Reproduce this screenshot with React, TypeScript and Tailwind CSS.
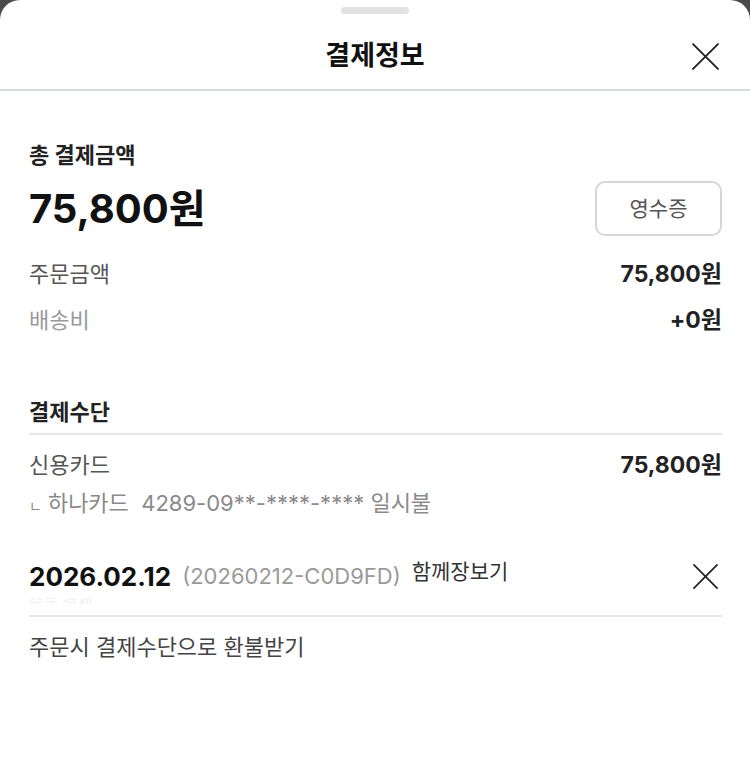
const font = { fontFamily: 'Inter, "Noto Sans CJK KR", "Noto Sans", sans-serif' };

function CloseIcon({ size }: { size: number }) {
  return (
    <svg width={size} height={size} viewBox="0 0 26 26" fill="none" stroke="#222" strokeWidth={1.8} strokeLinecap="round">
      <line x1="1" y1="1" x2="25" y2="25" />
      <line x1="25" y1="1" x2="1" y2="25" />
    </svg>
  );
}

function Row({ label, value, muted }: { label: string; value: string; muted?: boolean }) {
  return (
    <div className="flex items-center justify-between h-[46px]">
      <span className={muted ? 'text-[22px] text-[#9a9a9a]' : 'text-[22px] text-[#555]'}>{label}</span>
      <span className="text-[23px] font-bold text-[#222]">{value}</span>
    </div>
  );
}

export default function App() {
  return (
    <div className="w-[750px] h-[769px] bg-[#4a4a4a] overflow-hidden" style={font}>
      <div className="h-full bg-white rounded-t-[20px] flex flex-col">
        <div className="flex justify-center pt-[7px]">
          <div className="w-[68px] h-[7px] rounded-full bg-[#e2e2e2]" />
        </div>
        <div className="relative flex items-center justify-center h-[77px] pt-[8px] border-b-2 border-[#dadde0]">
          <h1 className="text-[27px] font-bold text-[#111] leading-[34px]">결제정보</h1>
          <div className="absolute right-[31px] top-[29px]">
            <CloseIcon size={27} />
          </div>
        </div>

        <div className="pl-[29px] pr-[28px] pt-[50px]">
          <div className="text-[22px] font-bold text-[#222] leading-[28px]">총 결제금액</div>
          <div className="flex items-center justify-between mt-[12px]">
            <span className="text-[40px] font-bold text-[#111] leading-none">75,800원</span>
            <button className="w-[127px] h-[55px] rounded-[10px] border-2 border-[#d6d6d6] text-[21px] text-[#555]">
              영수증
            </button>
          </div>
          <div className="mt-[15px]">
            <Row label="주문금액" value="75,800원" />
            <Row label="배송비" value="+0원" muted />
          </div>

          <div className="mt-[55px] pb-[5px] border-b-2 border-[#e6e6e6] leading-[28px]">
            <span className="text-[22px] font-bold text-[#222]">결제수단</span>
          </div>
          <div className="flex items-center justify-between mt-[16px] leading-[28px]">
            <span className="text-[22px] text-[#555]">신용카드</span>
            <span className="text-[23px] font-bold text-[#222]">75,800원</span>
          </div>
          <div className="mt-[10px] text-[22px] text-[#8a8a8a] leading-[28px]">
            <span className="text-[14px] mr-[6px]">ㄴ</span>하나카드&nbsp; 4289-09**-****-**** 일시불
          </div>

          <div className="flex items-center justify-between h-[32px] mt-[40px]">
            <div className="flex items-center gap-[11px]">
              <span className="text-[26px] font-bold text-[#111]">2026.02.12</span>
              <span className="text-[22px] text-[#9a9a9a]">(20260212-C0D9FD)</span>
              <span className="text-[21px] text-[#333] -mt-[8px]">함께장보기</span>
            </div>
            <div className="mr-[4px]">
              <CloseIcon size={25} />
            </div>
          </div>
          <div className="h-[6px] overflow-hidden mt-[6px] text-[16px] text-[#f0f0f0] leading-[16px]">
            <div className="-mt-[5px]">주문 결제</div>
          </div>
          <div className="border-b-2 border-[#e6e6e6] mt-[11px]" />
          <div className="mt-[16px] text-[22px] text-[#444] leading-[28px]">주문시 결제수단으로 환불받기</div>
        </div>
      </div>
    </div>
  );
}
